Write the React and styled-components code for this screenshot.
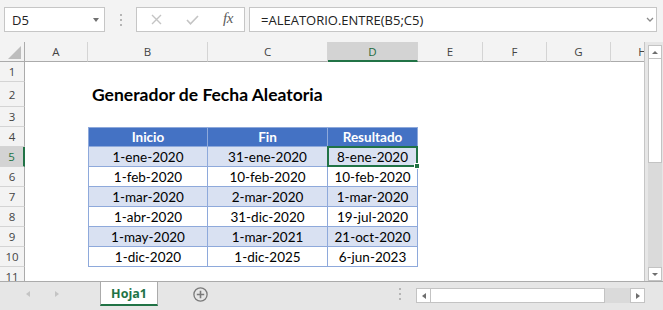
import React from 'react';
import styled, { createGlobalStyle, css } from 'styled-components';

const GlobalStyle = createGlobalStyle`
  *, *::before, *::after { box-sizing: border-box; }
  html, body { margin: 0; padding: 0; background: #ffffff; }
  body { width: 663px; height: 310px; overflow: hidden; }
`;

const Window = styled.div`
  width: 663px;
  height: 310px;
  display: flex;
  flex-direction: column;
  overflow: hidden;
  background: #f3f3f3;
  font-family: "Open Sans", "Noto Sans", sans-serif;
`;

/* ---------- formula bar ---------- */
const FormulaBar = styled.div`
  flex: none;
  height: 42px;
  display: flex;
  align-items: flex-start;
  padding: 7px 6px 0 4px;
  background: #f3f3f3;
`;

const Field = styled.div`
  height: 25px;
  background: #ffffff;
  border: 1px solid #c6c6c6;
  display: flex;
  align-items: center;
`;

const NameBox = styled(Field)`
  width: 101px;
  padding: 0 5px 0 7px;
  font-size: 13px;
  color: #222;
`;

const Caret = styled.span`
  margin-left: auto;
  width: 0;
  height: 0;
  border-left: 3.5px solid transparent;
  border-right: 3.5px solid transparent;
  border-top: 4px solid #707070;
`;

const Grip = styled.div`
  flex: none;
  width: ${p => p.$w || 31}px;
  height: ${p => p.$h || 25}px;
  display: flex;
  flex-direction: column;
  align-items: center;
  justify-content: center;
  gap: 3px;
`;

const Dot = styled.span`
  display: block;
  width: 2px;
  height: 2px;
  background: #b5b5b5;
`;

const FxBox = styled(Field)`
  width: 109px;
  padding-left: 1px;
  display: grid;
  grid-template-columns: repeat(3, 36px);
  align-items: center;
  justify-items: center;
`;

const FxLabel = styled.span`
  font-family: "Liberation Serif", "DejaVu Serif", serif;
  font-style: italic;
  font-size: 15px;
  letter-spacing: -0.5px;
  color: #5c5c5c;
  line-height: 1;
  margin-top: -2px;
`;

const FormulaInput = styled(Field)`
  flex: 1;
  margin-left: 4px;
  padding: 0 2px 0 11px;
  font-size: 13px;
  color: #222;
`;

const Chevron = styled.svg`
  margin-left: auto;
  flex: none;
`;

/* ---------- sheet ---------- */
const Main = styled.div`
  flex: none;
  height: 239px;
  display: flex;
  background: #ffffff;
`;

const Sheet = styled.div`
  flex: none;
  width: 645px;
  border-right: 1px solid #c6c6c6;
  overflow: hidden;
  background: #ffffff;
  display: grid;
  grid-template-columns: 25px 63px 120px 120px 90px 65px 64px 64px 64px;
  grid-template-rows: 20px 20px 25px repeat(9, 20px);
  align-content: start;
`;

const HeaderBase = css`
  display: flex;
  align-items: center;
  justify-content: center;
  font-family: "Open Sans", "Noto Sans", sans-serif;
  font-size: 11.5px;
`;

const Corner = styled.div`
  background: #f3f3f3;
  border-right: 1px solid #ababab;
  border-bottom: 1px solid #ababab;
  display: flex;
  align-items: flex-end;
  justify-content: flex-end;
  padding: 0 3px 2px 0;
`;

const CornerMark = styled.span`
  width: 0;
  height: 0;
  border-left: 13px solid transparent;
  border-bottom: 13px solid #bdbdbd;
`;

const ColHeader = styled.div`
  ${HeaderBase};
  background: ${p => (p.$active ? '#d3d3d3' : '#f3f3f3')};
  color: ${p => (p.$active ? '#1f6b40' : '#444444')};
  border-right: 1px solid #d4d4d4;
  border-bottom: ${p => (p.$active ? '2px solid #217346' : '1px solid #ababab')};
`;

const RowHeader = styled.div`
  ${HeaderBase};
  background: ${p => (p.$active ? '#d3d3d3' : '#f3f3f3')};
  color: ${p => (p.$active ? '#217346' : '#444444')};
  border-bottom: 1px solid #d4d4d4;
  border-right: ${p => (p.$active ? '2px solid #217346' : '1px solid #ababab')};
`;

const Blank = styled.div`
  background: #ffffff;
`;

const Title = styled.div`
  position: relative;
  z-index: 1;
  display: flex;
  align-items: flex-end;
  padding: 0 0 2px 4px;
  white-space: nowrap;
  font-family: Lato, "Liberation Sans", sans-serif;
  font-weight: 700;
  font-size: 17.5px;
  color: #000;
`;

const kindStyles = {
  head: css`
    background: #4472c4;
    color: #ffffff;
    font-weight: 700;
  `,
  band: css`
    background: #d9e1f2;
    color: #000000;
  `,
  plain: css`
    background: #ffffff;
    color: #000000;
  `,
};

const TableCell = styled.div`
  position: relative;
  display: flex;
  align-items: center;
  justify-content: center;
  white-space: nowrap;
  font-family: Lato, "Liberation Sans", sans-serif;
  font-size: 13.5px;
  border-right: 1px solid #8ea9db;
  border-bottom: 1px solid #8ea9db;
  ${p => p.$left && 'border-left: 1px solid #8ea9db;'}
  ${p => p.$top && 'border-top: 1px solid #8ea9db;'}
  ${p => kindStyles[p.$kind]};
`;

const Selection = styled.div`
  position: absolute;
  inset: -1px;
  border: 2px solid #217346;
  z-index: 2;
  pointer-events: none;
`;

const FillHandle = styled.span`
  position: absolute;
  right: -4px;
  bottom: -4px;
  width: 6px;
  height: 6px;
  background: #217346;
  border: 1px solid #ffffff;
`;

/* ---------- scrollbars ---------- */
const VScroll = styled.div`
  flex: 1;
  background: #e6e6e6;
  display: flex;
  flex-direction: column;
  padding: 3px 1px 0 3px;
`;

const ScrollBtn = styled.div`
  flex: none;
  width: ${p => p.$w || 14}px;
  height: ${p => p.$h || 14}px;
  background: #ffffff;
  border: 1px solid #c3c3c3;
  display: flex;
  align-items: center;
  justify-content: center;
`;

const Tri = styled.span`
  width: 0;
  height: 0;
  ${p =>
    p.$dir === 'up' &&
    css`
      border-left: 3px solid transparent;
      border-right: 3px solid transparent;
      border-bottom: 3.5px solid ${p.$c || '#6e6e6e'};
    `}
  ${p =>
    p.$dir === 'down' &&
    css`
      border-left: 3px solid transparent;
      border-right: 3px solid transparent;
      border-top: 3.5px solid ${p.$c || '#6e6e6e'};
    `}
  ${p =>
    p.$dir === 'left' &&
    css`
      border-top: 3px solid transparent;
      border-bottom: 3px solid transparent;
      border-right: 4px solid ${p.$c || '#6e6e6e'};
    `}
  ${p =>
    p.$dir === 'right' &&
    css`
      border-top: 3px solid transparent;
      border-bottom: 3px solid transparent;
      border-left: 4px solid ${p.$c || '#6e6e6e'};
    `}
`;

const VThumb = styled.div`
  flex: none;
  height: 104px;
  background: #ffffff;
  border: 1px solid #c3c3c3;
  border-top: none;
`;

const Track = styled.div`
  flex: 1;
  background: #dadada;
`;

/* ---------- tab bar ---------- */
const TabBar = styled.div`
  flex: 1;
  display: flex;
  align-items: flex-start;
  background: #e6e6e6;
  border-top: 1px solid #ababab;
`;

const NavArrows = styled.div`
  flex: none;
  width: 100px;
  height: 24px;
  display: flex;
  align-items: center;
  gap: 25px;
  padding-left: 26px;
`;

const SheetTab = styled.div`
  flex: none;
  width: 58px;
  height: 24px;
  background: #ffffff;
  border-left: 1px solid #ababab;
  border-right: 1px solid #ababab;
  border-bottom: 2px solid #217346;
  display: flex;
  align-items: center;
  justify-content: center;
  font-size: 12.5px;
  font-weight: 700;
  color: #217346;
`;

const AddSheet = styled.svg`
  flex: none;
  margin: 5px 0 0 35px;
`;

const HScroll = styled.div`
  flex: none;
  width: 229px;
  height: 15px;
  margin: 6px 18px 0 15px;
  display: flex;
`;

const HThumb = styled.div`
  flex: none;
  width: 174px;
  background: #ffffff;
  border: 1px solid #c3c3c3;
  border-left: none;
`;

const TabGrip = styled(Grip)`
  margin: 0 0 0 auto;
`;

const COLS = ['A', 'B', 'C', 'D', 'E', 'F', 'G', 'H'];

const TABLE = {
  4: ['Inicio', 'Fin', 'Resultado'],
  5: ['1-ene-2020', '31-ene-2020', '8-ene-2020'],
  6: ['1-feb-2020', '10-feb-2020', '10-feb-2020'],
  7: ['1-mar-2020', '2-mar-2020', '1-mar-2020'],
  8: ['1-abr-2020', '31-dic-2020', '19-jul-2020'],
  9: ['1-may-2020', '1-mar-2021', '21-oct-2020'],
  10: ['1-dic-2020', '1-dic-2025', '6-jun-2023'],
};

function renderCell(r, ci) {
  const key = `${r}-${ci}`;
  if (r === 2 && ci === 1) return <Title key={key}>Generador de Fecha Aleatoria</Title>;
  const row = TABLE[r];
  if (row && ci >= 1 && ci <= 3) {
    const kind = r === 4 ? 'head' : r % 2 === 1 ? 'band' : 'plain';
    const selected = r === 5 && ci === 3;
    return (
      <TableCell key={key} $kind={kind} $left={ci === 1} $top={r === 4}>
        {row[ci - 1]}
        {selected && (
          <Selection>
            <FillHandle />
          </Selection>
        )}
      </TableCell>
    );
  }
  return <Blank key={key} />;
}

export default function App() {
  return (
    <>
      <GlobalStyle />
      <Window>
        <FormulaBar>
          <NameBox>
            D5
            <Caret />
          </NameBox>
          <Grip>
            <Dot />
            <Dot />
            <Dot />
          </Grip>
          <FxBox>
            <svg width="11" height="11" viewBox="0 0 11 11">
              <path d="M1 1 L10 10 M10 1 L1 10" stroke="#c4c4c4" strokeWidth="1.4" fill="none" />
            </svg>
            <svg width="13" height="10" viewBox="0 0 13 10">
              <path d="M1 5 L4.5 8.8 L12 1" stroke="#c4c4c4" strokeWidth="1.6" fill="none" />
            </svg>
            <FxLabel>fx</FxLabel>
          </FxBox>
          <FormulaInput>
            =ALEATORIO.ENTRE(B5;C5)
            <Chevron width="8" height="5" viewBox="0 0 8 5">
              <path d="M1 1 L4 4 L7 1" stroke="#8a8a8a" strokeWidth="1.3" fill="none" />
            </Chevron>
          </FormulaInput>
        </FormulaBar>

        <Main>
          <Sheet>
            <Corner>
              <CornerMark />
            </Corner>
            {COLS.map(c => (
              <ColHeader key={c} $active={c === 'D'}>
                {c}
              </ColHeader>
            ))}
            {Array.from({ length: 11 }, (_, i) => {
              const r = i + 1;
              return (
                <React.Fragment key={r}>
                  <RowHeader $active={r === 5}>{r}</RowHeader>
                  {COLS.map((_, ci) => renderCell(r, ci))}
                </React.Fragment>
              );
            })}
          </Sheet>
          <VScroll>
            <ScrollBtn>
              <Tri $dir="up" />
            </ScrollBtn>
            <VThumb />
            <Track />
            <ScrollBtn>
              <Tri $dir="down" />
            </ScrollBtn>
          </VScroll>
        </Main>

        <TabBar>
          <NavArrows>
            <Tri $dir="left" $c="#c4c4c4" />
            <Tri $dir="right" $c="#c4c4c4" />
          </NavArrows>
          <SheetTab>Hoja1</SheetTab>
          <AddSheet width="15" height="15" viewBox="0 0 15 15">
            <circle cx="7.5" cy="7.5" r="6.6" stroke="#7a7a7a" strokeWidth="1.3" fill="none" />
            <path d="M7.5 3.8 V11.2 M3.8 7.5 H11.2" stroke="#7a7a7a" strokeWidth="1.6" />
          </AddSheet>
          <TabGrip $w={2} $h={24}>
            <Dot />
            <Dot />
            <Dot />
          </TabGrip>
          <HScroll>
            <ScrollBtn $w={15} $h={15}>
              <Tri $dir="left" />
            </ScrollBtn>
            <HThumb />
            <Track />
            <ScrollBtn $w={15} $h={15}>
              <Tri $dir="right" />
            </ScrollBtn>
          </HScroll>
        </TabBar>
      </Window>
    </>
  );
}
